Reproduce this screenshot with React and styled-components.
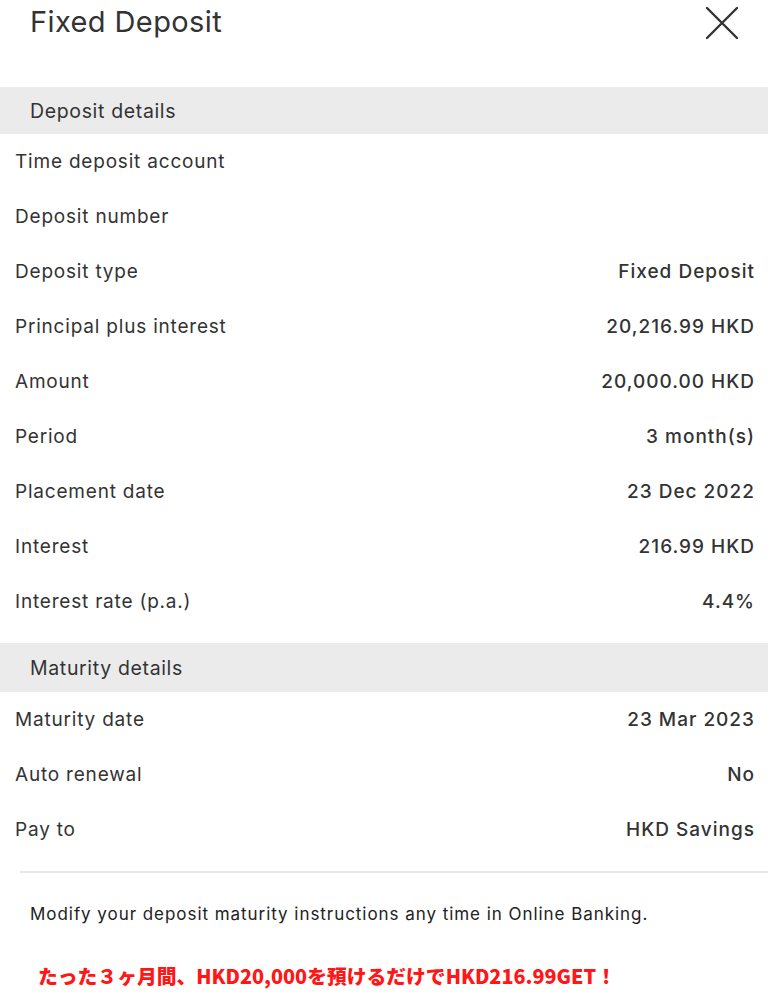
import styled, { createGlobalStyle } from "styled-components";

const GlobalStyle = createGlobalStyle`
  body {
    margin: 0;
    background: #ffffff;
    font-family: Inter, Roboto, "Noto Sans", "Liberation Sans", sans-serif;
    color: #333333;
  }
`;

const depositRows = [
  { label: "Time deposit account", value: "" },
  { label: "Deposit number", value: "" },
  { label: "Deposit type", value: "Fixed Deposit" },
  { label: "Principal plus interest", value: "20,216.99 HKD" },
  { label: "Amount", value: "20,000.00 HKD" },
  { label: "Period", value: "3 month(s)" },
  { label: "Placement date", value: "23 Dec 2022" },
  { label: "Interest", value: "216.99 HKD" },
  { label: "Interest rate (p.a.)", value: "4.4%" },
];

const maturityRows = [
  { label: "Maturity date", value: "23 Mar 2023" },
  { label: "Auto renewal", value: "No" },
  { label: "Pay to", value: "HKD Savings" },
];

const CloseIcon = () => (
  <svg width="34" height="34" viewBox="0 0 34 34" fill="none">
    <path d="M2 2L32 32M32 2L2 32" stroke="#333" strokeWidth="2.4" strokeLinecap="round" />
  </svg>
);

const App = () => {
  return (
    <Page>
      <GlobalStyle />
      <TopBar>
        <Title>Fixed Deposit</Title>
        <CloseButton>
          <CloseIcon />
        </CloseButton>
      </TopBar>

      <SectionHeader>Deposit details</SectionHeader>
      <List>
        {depositRows.map((row) => (
          <Row key={row.label}>
            <Label>{row.label}</Label>
            <Value>{row.value}</Value>
          </Row>
        ))}
      </List>

      <SectionHeader spaced>Maturity details</SectionHeader>
      <List>
        {maturityRows.map((row) => (
          <Row key={row.label}>
            <Label>{row.label}</Label>
            <Value>{row.value}</Value>
          </Row>
        ))}
      </List>

      <Divider />
      <Note>Modify your deposit maturity instructions any time in Online Banking.</Note>
      <Promo>たった３ヶ月間、HKD20,000を預けるだけでHKD216.99GET！</Promo>
    </Page>
  );
};

const Page = styled.div`
  width: 768px;
  height: 1004px;
  overflow: hidden;
  background: #fff;
`;

const TopBar = styled.header`
  height: 87px;
  display: flex;
  justify-content: space-between;
  align-items: flex-start;
  padding: 0 29px 0 30px;
  box-sizing: border-box;
`;

const Title = styled.h1`
  margin: 4px 0 0;
  font-size: 29px;
  font-weight: 400;
  line-height: 36px;
  letter-spacing: 0.4px;
  color: #333;
`;

const CloseButton = styled.div`
  margin-top: 6px;
  display: flex;
`;

const SectionHeader = styled.div`
  margin-top: ${({ spaced }) => (spaced ? "14px" : "0")};
  height: ${({ spaced }) => (spaced ? "49px" : "47px")};
  background: #ebebeb;
  display: flex;
  align-items: center;
  padding-left: 30px;
  font-size: 19.5px;
  letter-spacing: 0.65px;
  color: #333;
`;

const List = styled.div`
  display: flex;
  flex-direction: column;
`;

const Row = styled.div`
  height: 55px;
  display: flex;
  align-items: center;
  justify-content: space-between;
  padding: 0 13px 0 15px;
`;

const Label = styled.span`
  font-size: 19px;
  letter-spacing: 0.8px;
  color: #333;
  margin-top: -1px;
`;

const Value = styled.span`
  font-size: 19px;
  font-weight: 500;
  letter-spacing: 1px;
  color: #333;
  margin-top: -1px;
`;

const Divider = styled.hr`
  margin: 14px 0 0 20px;
  border: none;
  height: 2px;
  background: #e8e8e8;
`;

const Note = styled.p`
  margin: 0;
  padding: 30px 30px 0;
  font-size: 17px;
  line-height: 22px;
  letter-spacing: 0.95px;
  color: #222;
`;

const Promo = styled.p`
  margin: 0;
  padding: 39px 38px 0;
  font-family: "Noto Sans CJK JP", sans-serif;
  font-size: 19.8px;
  font-weight: 900;
  line-height: 24px;
  color: #ff1616;
  letter-spacing: 0;
`;

export default App;
